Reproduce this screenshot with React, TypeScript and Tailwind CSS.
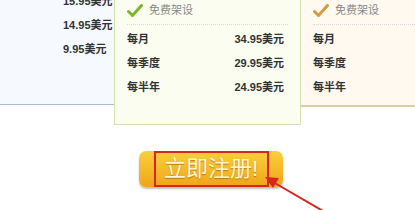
import React from "react";

const font = { fontFamily: '"Liberation Sans", "Noto Sans CJK SC", sans-serif' };

function Check({ color }: { color: string }) {
  return (
    <svg width="16" height="14" viewBox="0 0 16 14" aria-hidden="true">
      <path d="M1.5 7.5 L5.5 11.5 L14.5 1.5" fill="none" stroke={color} strokeWidth="3" strokeLinecap="round" strokeLinejoin="round" />
    </svg>
  );
}

const plans = [
  { label: "每月", price: "34.95美元" },
  { label: "每季度", price: "29.95美元" },
  { label: "每半年", price: "24.95美元" },
];

export default function App() {
  return (
    <div className="relative h-[210px] w-[415px] overflow-hidden bg-white text-[#333]" style={font}>
      <div className="flex items-start">
        {/* left column */}
        <div className="h-[105px] w-[114px] border-b border-[#a9bfd4] bg-[#f6f9fd]">
          <div className="-mt-[6px] flex flex-col gap-[9px] pl-[63px] text-[11px] font-bold leading-[15px]">
            <span>15.95美元</span>
            <span>14.95美元</span>
            <span>9.95美元</span>
          </div>
        </div>

        {/* middle column */}
        <div className="h-[125px] w-[187px] border-x border-b border-[#d3e2b0] bg-[#fafdf0] px-[12px]">
          <div className="flex h-[21px] items-center gap-[6px] text-[11px] text-[#888]">
            <Check color="#7ab52e" />
            <span>免费架设</span>
          </div>
          <div className="mt-[3px] border-t border-dotted border-[#d8d8d8]" />
          <div className="mt-[7px] flex flex-col gap-[9px] text-[11px] font-bold leading-[15px]">
            {plans.map((p) => (
              <div key={p.label} className="flex justify-between pr-[4px]">
                <span>{p.label}</span>
                <span>{p.price}</span>
              </div>
            ))}
          </div>
        </div>

        {/* right column */}
        <div className="h-[107px] flex-1 border-b-2 border-[#d9cfa8] bg-[#fff9f0] pl-[12px]">
          <div className="flex h-[21px] items-center gap-[6px] text-[11px] text-[#888]">
            <Check color="#d79a3c" />
            <span>免费架设</span>
          </div>
          <div className="mt-[3px] border-t border-dotted border-[#d8d8d8]" />
          <div className="mt-[7px] flex flex-col gap-[9px] text-[11px] font-bold leading-[15px]">
            {plans.map((p) => (
              <span key={p.label}>{p.label}</span>
            ))}
          </div>
        </div>
      </div>

      {/* signup button */}
      <div className="ml-[139px] mt-[26px] flex h-[36px] w-[144px] items-center justify-center rounded-[7px] bg-gradient-to-b from-[#fbcf3b] to-[#eea516] shadow-[0_2px_2px_rgba(0,0,0,0.25)]">
        <div className="flex h-[36px] w-[115px] items-center justify-center border-2 border-[#d9261c] text-[22px] leading-none text-[#fff7d6] [text-shadow:0_1px_1px_rgba(150,80,0,0.6)]">
          立即注册!
        </div>
      </div>

      {/* arrow */}
      <svg className="absolute left-0 top-0" width="415" height="210" viewBox="0 0 415 210" aria-hidden="true">
        <line x1="323" y1="211" x2="273" y2="182" stroke="#d9261c" strokeWidth="2" />
        <polygon points="265,177 279,178 273,188" fill="#d9261c" />
      </svg>
    </div>
  );
}
